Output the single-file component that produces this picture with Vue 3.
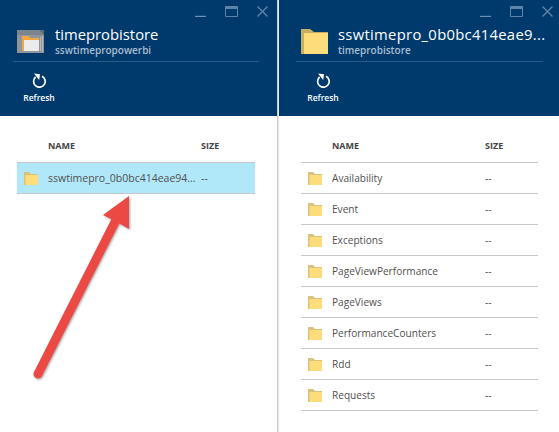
<template>
  <div class="page">
    <section v-for="blade in blades" :key="blade.title" class="blade" :class="blade.cls">
      <header class="head">
        <div class="controls">
          <svg width="11" height="11" viewBox="0 0 11 11"><path d="M0 10.5h11" stroke="#6f90ae" stroke-width="1.4" /></svg>
          <svg width="13" height="11" viewBox="0 0 13 11"><path d="M.5.5h12v10H.5z" fill="none" stroke="#5f84a6" /><path d="M.5 2h12" stroke="#5f84a6" stroke-width="2" /></svg>
          <svg width="11" height="11" viewBox="0 0 11 11"><path d="M.5.5l10 10M10.5.5l-10 10" stroke="#5f84a6" stroke-width="1.4" /></svg>
        </div>
        <div class="title-row">
          <svg v-if="blade.cls === 'left'" class="big-icon" width="27" height="23" viewBox="0 0 27 23">
            <rect width="27" height="23" fill="#8f959a" />
            <path d="M0 0h27v5H0z" fill="#7d858c" />
            <path d="M22 0h5v5z" fill="#5f6b75" />
            <path d="M25 6h1v16h-1zM23 7h1v14h-1z" fill="#b5b9bd" />
            <path d="M5 6h7l1 2h9v13H5z" fill="#f4a640" />
            <path d="M7 10h15v11H7z" fill="#ececec" />
          </svg>
          <svg v-else class="big-icon" width="27" height="25" viewBox="0 0 27 25">
            <path d="M0 0h9l4 3h14v22H0z" fill="#c7ae62" />
            <path d="M3 4h24v21H3z" fill="#fddc7c" />
          </svg>
          <div class="titles">
            <div class="title">{{ blade.title }}</div>
            <div class="sub">{{ blade.sub }}</div>
          </div>
        </div>
        <div class="command-bar">
          <button class="refresh">
            <svg width="15" height="15" viewBox="0 0 15 15">
              <path d="M10 3.2A5.8 5.8 0 1 1 3.6 4" fill="none" stroke="#fff" stroke-width="1.7" />
              <path d="M2 .6L8 1.2 7.2 7z" fill="#fff" />
            </svg>
            <span>Refresh</span>
          </button>
        </div>
      </header>
      <div class="list">
        <div class="row head-row">
          <span class="name">NAME</span>
          <span class="size">SIZE</span>
        </div>
        <div v-for="item in blade.items" :key="item" class="row item" :class="{ selected: blade.cls === 'left' }">
          <svg class="folder" width="14" height="13" viewBox="0 0 14 13">
            <path d="M0 0h5l2 2h7v11H0z" fill="#d9c27c" />
            <path d="M1.5 3H14v10H1.5z" fill="#fddc7c" />
          </svg>
          <span class="name">{{ item }}</span>
          <span class="size">--</span>
        </div>
      </div>
    </section>

    <svg class="arrow" width="130" height="200" viewBox="0 0 130 200">
      <defs>
        <filter id="shadow" x="-20%" y="-20%" width="140%" height="140%">
          <feDropShadow dx="1" dy="1" stdDeviation="1.2" flood-color="#555" flood-opacity=".55" />
        </filter>
      </defs>
      <g filter="url(#shadow)">
        <path d="M8 184L87 28" stroke="#ec4a45" stroke-width="9" stroke-linecap="round" />
        <path d="M99 6L73 25 85 31 99 39z" fill="#ec4a45" />
      </g>
    </svg>
  </div>
</template>

<script setup>
const blades = [
  {
    cls: 'left',
    title: 'timeprobistore',
    sub: 'sswtimepropowerbi',
    items: ['sswtimepro_0b0bc414eae94...']
  },
  {
    cls: 'right',
    title: 'sswtimepro_0b0bc414eae9...',
    sub: 'timeprobistore',
    items: [
      'Availability',
      'Event',
      'Exceptions',
      'PageViewPerformance',
      'PageViews',
      'PerformanceCounters',
      'Rdd',
      'Requests'
    ]
  }
]
</script>

<style>
html, body {
  margin: 0;
  background: #fff;
}
</style>

<style scoped>
.page {
  position: relative;
  display: flex;
  width: 559px;
  height: 432px;
  overflow: hidden;
  font-family: "Open Sans", "Noto Sans", sans-serif;
  background: #fff;
}

.blade {
  display: flex;
  flex-direction: column;
  flex: none;
  box-sizing: border-box;
  height: 100%;
}

.blade.left {
  width: 278px;
  border-right: 1px solid #c9c9c9;
}

.blade.right {
  width: 281px;
  border-left: 1px solid #e8e8e8;
}

.head {
  height: 116px;
  flex: none;
  background: #003a6c;
  color: #fff;
  box-sizing: border-box;
}

.left .head { padding: 0 18px 0 13px; }
.right .head { padding: 0 16px 0 17px; }

.controls {
  display: flex;
  justify-content: flex-end;
  align-items: center;
  gap: 19px;
  height: 22px;
}

.left .controls { margin-right: -9px; }
.right .controls { margin-right: -10px; }

.title-row {
  display: flex;
  align-items: center;
  height: 39px;
  border-bottom: 1px solid #2a5a86;
}

.left .title-row { padding-left: 4px; gap: 11px; }
.right .title-row { padding-left: 5px; gap: 10px; }

.big-icon {
  flex: none;
}

.titles {
  padding-bottom: 3px;
}

.title {
  font-size: 14.8px;
  line-height: 20px;
  white-space: nowrap;
}

.right .title {
  letter-spacing: .3px;
}

.sub {
  font-size: 10px;
  line-height: 13px;
  font-weight: 600;
  color: #a9bed2;
}

.command-bar {
  padding-top: 11px;
}

.refresh {
  display: flex;
  flex-direction: column;
  align-items: center;
  gap: 4px;
  width: 36px;
  padding: 0;
  border: 0;
  background: none;
  color: #fff;
  font-family: inherit;
  font-size: 8.5px;
  font-weight: 600;
}

.left .refresh { margin-left: 8px; }
.right .refresh { margin-left: 9px; }

.list {
  display: flex;
  flex-direction: column;
}

.left .list { margin: 16px 22px 0 17px; }
.right .list { margin: 16px 21px 0 22px; }

.row {
  display: flex;
  align-items: center;
  height: 31px;
  box-sizing: border-box;
  border-bottom: 1px solid #c8c8c8;
  font-size: 10.5px;
  color: #505050;
}

.right .item {
  font-size: 10.1px;
}

.head-row {
  padding-left: 31px;
  padding-bottom: 4px;
  font-size: 9px;
  font-weight: 700;
  color: #444;
}

.row .name {
  width: 153px;
}

.item {
  padding-left: 7px;
}

.item .folder {
  flex: none;
  margin-right: 10px;
}

.item.selected {
  background: #b1e8f9;
}

.name {
  white-space: nowrap;
}

.arrow {
  position: absolute;
  left: 30px;
  top: 190px;
}
</style>
